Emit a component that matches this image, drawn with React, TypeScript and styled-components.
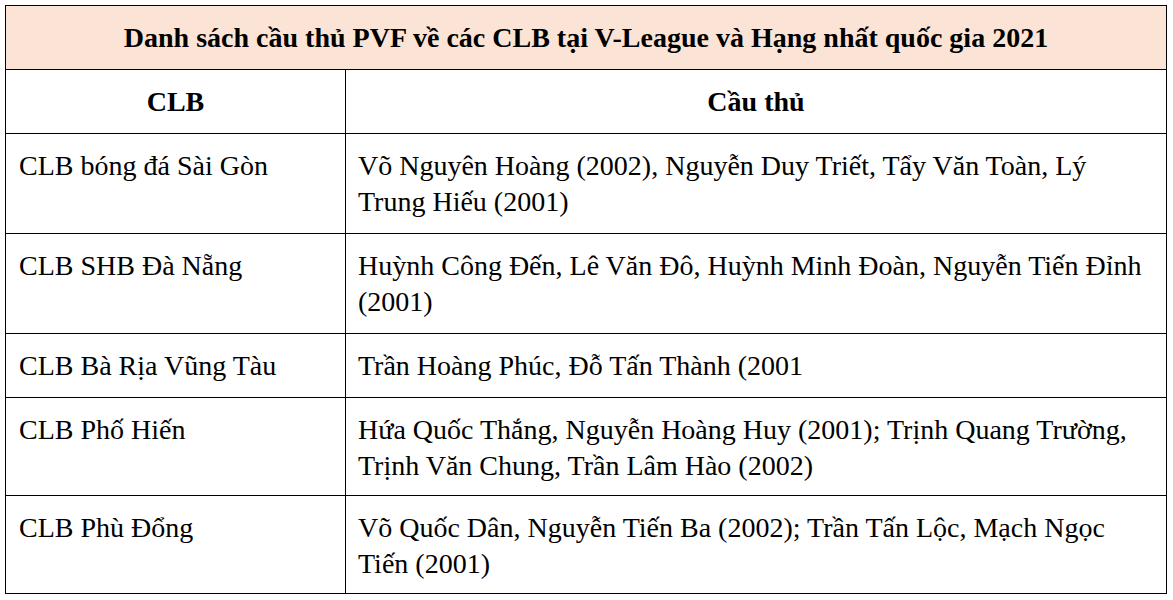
import React from "react";
import styled, { createGlobalStyle } from "styled-components";

const GlobalStyle = createGlobalStyle`
  html, body {
    margin: 0;
    padding: 0;
    background: #fff;
  }
  body, table, th, td {
    font-family: "Liberation Serif", "Times New Roman", serif;
    color: #000;
  }
`;

const Page = styled.div`
  padding: 5px 0 0 5px;
`;

const Table = styled.table`
  border-collapse: collapse;
  width: 1162px;
  table-layout: fixed;
  border: 1px solid #000;
`;

const TitleCell = styled.th`
  background: #fbe4d5;
  height: 63px;
  padding: 0;
  font-size: 28px;
  font-weight: 700;
  text-align: center;
  vertical-align: middle;
  border: 1px solid #000;
`;

const HeadCell = styled.th`
  height: 63px;
  padding: 0;
  font-size: 28px;
  font-weight: 700;
  text-align: center;
  vertical-align: middle;
  border: 1px solid #000;
`;

const Cell = styled.td<{ $first?: boolean; $pb: number }>`
  padding: 14px 12px ${(p) => p.$pb}px ${(p) => (p.$first ? "13px" : "12px")};
  font-size: 28px;
  line-height: 36px;
  vertical-align: top;
  border: 1px solid #000;
`;

const rows: { club: string; players: string[]; pb: number }[] = [
  {
    club: "CLB bóng đá Sài Gòn",
    players: [
      "Võ Nguyên Hoàng (2002), Nguyễn Duy Triết, Tẩy Văn Toàn, Lý",
      "Trung Hiếu (2001)",
    ],
    pb: 13,
  },
  {
    club: "CLB SHB Đà Nẵng",
    players: [
      "Huỳnh Công Đến, Lê Văn Đô, Huỳnh Minh Đoàn, Nguyễn Tiến Đỉnh",
      "(2001)",
    ],
    pb: 13,
  },
  {
    club: "CLB Bà Rịa Vũng Tàu",
    players: ["Trần Hoàng Phúc, Đỗ Tấn Thành (2001"],
    pb: 13,
  },
  {
    club: "CLB Phố Hiến",
    players: [
      "Hứa Quốc Thắng, Nguyễn Hoàng Huy (2001); Trịnh Quang Trường,",
      "Trịnh Văn Chung, Trần Lâm Hào (2002)",
    ],
    pb: 11,
  },
  {
    club: "CLB Phù Đổng",
    players: [
      "Võ Quốc Dân, Nguyễn Tiến Ba (2002); Trần Tấn Lộc, Mạch Ngọc",
      "Tiến (2001)",
    ],
    pb: 11,
  },
];

export default function App() {
  return (
    <Page>
      <GlobalStyle />
      <Table>
        <colgroup>
          <col style={{ width: 340 }} />
          <col />
        </colgroup>
        <thead>
          <tr>
            <TitleCell colSpan={2}>
              Danh sách cầu thủ PVF về các CLB tại V-League và Hạng nhất quốc gia 2021
            </TitleCell>
          </tr>
          <tr>
            <HeadCell>CLB</HeadCell>
            <HeadCell>Cầu thủ</HeadCell>
          </tr>
        </thead>
        <tbody>
          {rows.map((r) => (
            <tr key={r.club}>
              <Cell $first $pb={r.pb}>
                {r.club}
              </Cell>
              <Cell $pb={r.pb}>
                {r.players.map((line, i) => (
                  <React.Fragment key={i}>
                    {i > 0 && <br />}
                    {line}
                  </React.Fragment>
                ))}
              </Cell>
            </tr>
          ))}
        </tbody>
      </Table>
    </Page>
  );
}
